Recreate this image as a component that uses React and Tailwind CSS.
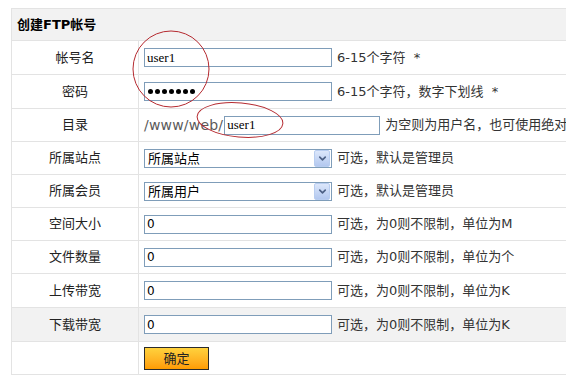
import { ChevronDown } from "lucide-react";

const cjk = "font-['Tahoma','DejaVu_Sans','Noto_Sans_CJK_SC',sans-serif]";

const rows = [
  { label: "帐号名", h: "h-[34px]", kind: "text", value: "user1", hint: "6-15个字符  *" },
  { label: "密码", h: "h-[34px]", kind: "password", value: "1234567", hint: "6-15个字符，数字下划线  *" },
  { label: "目录", h: "h-[33px]", kind: "dir", value: "user1", hint: "为空则为用户名，也可使用绝对路径" },
  { label: "所属站点", h: "h-[33px]", kind: "select", value: "所属站点", hint: "可选，默认是管理员" },
  { label: "所属会员", h: "h-[33px]", kind: "select", value: "所属用户", hint: "可选，默认是管理员" },
  { label: "空间大小", h: "h-[33px]", kind: "num", value: "0", hint: "可选，为0则不限制，单位为M" },
  { label: "文件数量", h: "h-[33px]", kind: "num", value: "0", hint: "可选，为0则不限制，单位为个" },
  { label: "上传带宽", h: "h-[34px]", kind: "num", value: "0", hint: "可选，为0则不限制，单位为K" },
  { label: "下载带宽", h: "h-[34px]", kind: "num", value: "0", hint: "可选，为0则不限制，单位为K", hover: true },
];

function Field({ row }) {
  if (row.kind === "select") {
    return (
      <div className="flex items-center w-[188px] h-[19px] border border-[#7f9db9] bg-white">
        <span className="flex-1 pl-[3px] text-[13px] leading-none text-black">{row.value}</span>
        <span className="w-[16px] h-[17px] mr-px flex items-center justify-center rounded-[2px] border border-[#b8cdf0] bg-gradient-to-b from-[#dce7fb] to-[#b3c8ef]">
          <ChevronDown size={11} strokeWidth={3.5} className="text-[#4d6185]" />
        </span>
      </div>
    );
  }
  if (row.kind === "dir") {
    return (
      <div className="flex items-center">
        <span className="font-['DejaVu_Sans',sans-serif] text-[14px] text-[#5a5a5a] tracking-[0.2px] pr-[1px]">/www/web/</span>
        <input
          readOnly
          value={row.value}
          className="w-[156px] h-[19px] border border-[#7f9db9] bg-white px-[2px] text-[13px] font-['Liberation_Serif',serif] text-black outline-none"
        />
      </div>
    );
  }
  if (row.kind === "password") {
    return (
      <div className="w-[188px] h-[19px] border border-[#7f9db9] bg-white pl-[3px] flex items-center gap-[2px]">
        {row.value.split("").map((c, i) => (
          <span key={i} className="w-[5px] h-[5px] rounded-full bg-black" />
        ))}
      </div>
    );
  }
  return (
    <input
      readOnly
      value={row.value}
      className={
        "w-[188px] h-[19px] border border-[#7f9db9] bg-white px-[2px] text-black outline-none " +
        (row.kind === "text"
          ? "text-[13px] font-['Liberation_Serif',serif]"
          : "text-[12px] font-['Tahoma','DejaVu_Sans',sans-serif]")
      }
    />
  );
}

export default function App() {
  return (
    <div className={"relative w-[566px] h-[376px] overflow-hidden bg-white " + cjk}>
      <div className="ml-[11px] mt-[8px] w-[640px] border-l border-[#e3e3e3]">
        <div className="h-[33px] flex items-center pl-[5px] border-y border-[#e3e3e3] bg-[#f2f2f2] text-[13px] font-bold text-black">
          创建FTP帐号
        </div>

        {rows.map((row) => (
          <div
            key={row.label}
            className={
              "flex border-b border-[#e3e3e3] " + row.h + (row.hover ? " bg-[#f2f2f2]" : " bg-white")
            }
          >
            <div className="w-[127px] shrink-0 border-r border-[#e3e3e3] flex items-center justify-center text-[13px] text-[#222]">
              {row.label}
            </div>
            <div className="flex-1 flex items-center pl-[5px] gap-[5px] text-[13px] text-[#333] whitespace-pre">
              <Field row={row} />
              <span>{row.hint}</span>
            </div>
          </div>
        ))}

        <div className="flex h-[33px] border-b border-[#e3e3e3]">
          <div className="w-[127px] shrink-0 border-r border-[#e3e3e3]" />
          <div className="flex-1 flex items-center pl-[5px]">
            <button className="w-[65px] h-[23px] border border-[#2b2b2b] bg-gradient-to-b from-[#ffd23c] to-[#ff9c00] text-[13px] text-[#222] leading-none">
              确定
            </button>
          </div>
        </div>
      </div>

      <svg className="absolute inset-0 pointer-events-none" width="566" height="376">
        <ellipse cx="171" cy="69" rx="38" ry="38" fill="none" stroke="#b52a30" strokeWidth="1" />
        <ellipse cx="240" cy="120" rx="43" ry="17" fill="none" stroke="#b52a30" strokeWidth="1" transform="rotate(5 240 120)" />
      </svg>
    </div>
  );
}
